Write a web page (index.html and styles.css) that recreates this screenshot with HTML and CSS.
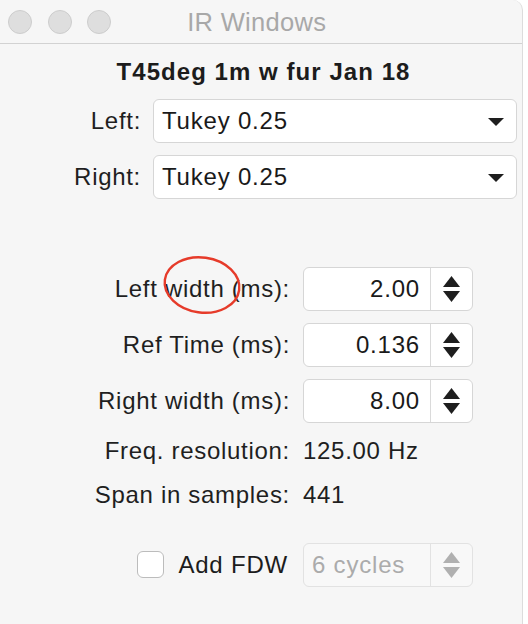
FILE: index.html
```html
<!DOCTYPE html>
<html>
<head>
<meta charset="utf-8">
<title>IR Windows</title>
<link rel="stylesheet" href="styles.css">
</head>
<body>
<div class="window">
  <div class="titlebar">
    <div class="lights">
      <span class="light"></span>
      <span class="light"></span>
      <span class="light"></span>
    </div>
    <div class="title">IR Windows</div>
  </div>
  <div class="content">
    <h1 class="heading">T45deg 1m w fur Jan 18</h1>
    <div class="popups">
      <div class="label">Left:</div>
      <div class="popup"><span class="popup-text">Tukey 0.25</span><svg class="popup-arrow" viewBox="0 0 16 8" width="16" height="8"><polygon points="0,0 16,0 8,8" fill="#1e1e1e"/></svg></div>
      <div class="label">Right:</div>
      <div class="popup"><span class="popup-text">Tukey 0.25</span><svg class="popup-arrow" viewBox="0 0 16 8" width="16" height="8"><polygon points="0,0 16,0 8,8" fill="#1e1e1e"/></svg></div>
    </div>
    <div class="fields steppers">
      <div class="label">Left width (ms):</div>
      <div class="stepper"><span class="value">2.00</span><span class="arrows"><svg viewBox="0 0 17 26" width="17" height="26"><polygon points="0,11 8.5,0 17,11" /><polygon points="0,15 17,15 8.5,26" /></svg></span></div>
      <div class="label">Ref Time (ms):</div>
      <div class="stepper"><span class="value">0.136</span><span class="arrows"><svg viewBox="0 0 17 26" width="17" height="26"><polygon points="0,11 8.5,0 17,11" /><polygon points="0,15 17,15 8.5,26" /></svg></span></div>
      <div class="label">Right width (ms):</div>
      <div class="stepper"><span class="value">8.00</span><span class="arrows"><svg viewBox="0 0 17 26" width="17" height="26"><polygon points="0,11 8.5,0 17,11" /><polygon points="0,15 17,15 8.5,26" /></svg></span></div>
    </div>
    <div class="fields info">
      <div class="label">Freq. resolution:</div>
      <div class="info-value">125.00 Hz</div>
      <div class="label">Span in samples:</div>
      <div class="info-value">441</div>
    </div>
    <div class="fields check-row">
      <div class="check-wrap"><span class="checkbox"></span><span class="check-label">Add FDW</span></div>
      <div class="stepper disabled"><span class="value left">6 cycles</span><span class="arrows"><svg viewBox="0 0 17 26" width="17" height="26"><polygon points="0,11 8.5,0 17,11" /><polygon points="0,15 17,15 8.5,26" /></svg></span></div>
    </div>
  </div>
  <svg class="annotation" viewBox="0 0 86 66" width="86" height="66"><ellipse cx="43" cy="33" rx="37.5" ry="27.5" transform="rotate(8 43 33)" fill="none" stroke="#e63b2a" stroke-width="2.4"/></svg>
</div>
</body>
</html>
```
FILE: styles.css
```css
html, body {
  margin: 0;
  padding: 0;
  background: #ffffff;
}
body {
  font-family: "Liberation Sans", Arial, sans-serif;
  color: #1c1c1c;
}
.window {
  position: relative;
  width: 522px;
  height: 624px;
  background: #f6f6f6;
  border-right: 1px solid #dcdcdc;
  border-top-right-radius: 10px;
  box-sizing: content-box;
  overflow: hidden;
}
.titlebar {
  height: 43px;
  border-bottom: 1px solid #d2d2d2;
  display: flex;
  align-items: center;
  padding-left: 8px;
}
.lights {
  display: flex;
  gap: 15.6px;
}
.light {
  width: 22px;
  height: 22px;
  border-radius: 50%;
  background: #dedede;
  border: 1px solid #cdcdcd;
}
.title {
  margin-left: 76px;
  font-size: 25.5px;
  letter-spacing: 0.3px;
  color: #a8a8a8;
  line-height: 30px;
}
.heading {
  margin: 14px 0 13px;
  padding-left: 5px;
  height: 28px;
  line-height: 28px;
  font-size: 24px;
  font-weight: bold;
  letter-spacing: 1.05px;
  text-align: center;
  color: #1c1c1c;
}
.label {
  font-size: 24px;
  letter-spacing: 0.7px;
  line-height: 44px;
  text-align: right;
  white-space: nowrap;
  color: #1f1f1f;
}
.popups {
  display: grid;
  grid-template-columns: 141px 364px;
  grid-auto-rows: 44px;
  column-gap: 12px;
  row-gap: 12px;
}
.popup {
  box-sizing: border-box;
  height: 44px;
  background: #fff;
  border: 1px solid #d6d6d6;
  border-radius: 6px;
  display: flex;
  align-items: center;
  justify-content: space-between;
  padding: 0 12px 0 8px;
}
.popup-text {
  font-size: 24px;
  letter-spacing: 0.8px;
  color: #1a1a1a;
}
.popup-arrow {
  display: block;
  margin-top: 1px;
}
.fields {
  display: grid;
  grid-template-columns: 290px 170px;
  grid-auto-rows: 44px;
  column-gap: 13px;
}
.steppers {
  margin-top: 68px;
  row-gap: 12px;
}
.info {
  margin-top: 6px;
}
.check-row {
  margin-top: 26px;
}
.stepper {
  box-sizing: border-box;
  height: 44px;
  background: #fff;
  border: 1px solid #d6d6d6;
  border-radius: 6px;
  display: flex;
}
.value {
  flex: 1;
  text-align: right;
  font-size: 24px;
  letter-spacing: 0.8px;
  line-height: 42px;
  padding-right: 10px;
  color: #1a1a1a;
}
.value.left {
  text-align: left;
  padding-left: 8px;
}
.arrows {
  width: 41px;
  border-left: 1px solid #dadada;
  display: flex;
  align-items: center;
  justify-content: center;
}
.arrows svg {
  display: block;
  fill: #1e1e1e;
}
.info-value {
  font-size: 24px;
  letter-spacing: 0.7px;
  line-height: 44px;
  white-space: nowrap;
  color: #1f1f1f;
}
.check-wrap {
  display: flex;
  align-items: center;
  justify-content: flex-end;
  gap: 14px;
  padding-right: 2px;
}
.checkbox {
  box-sizing: border-box;
  width: 27px;
  height: 27px;
  border: 1.5px solid #bcbcbc;
  border-radius: 6px;
  background: #fff;
  margin-top: -2px;
}
.check-label {
  font-size: 24px;
  letter-spacing: 0.8px;
  color: #1c1c1c;
}
.stepper.disabled {
  border-color: #e2e2e2;
  background: #f8f8f8;
}
.stepper.disabled .value {
  color: #ababab;
}
.stepper.disabled .arrows {
  border-left-color: #e2e2e2;
}
.stepper.disabled .arrows svg {
  fill: #b0b0b0;
}
.annotation {
  position: absolute;
  left: 159px;
  top: 252px;
}
```
